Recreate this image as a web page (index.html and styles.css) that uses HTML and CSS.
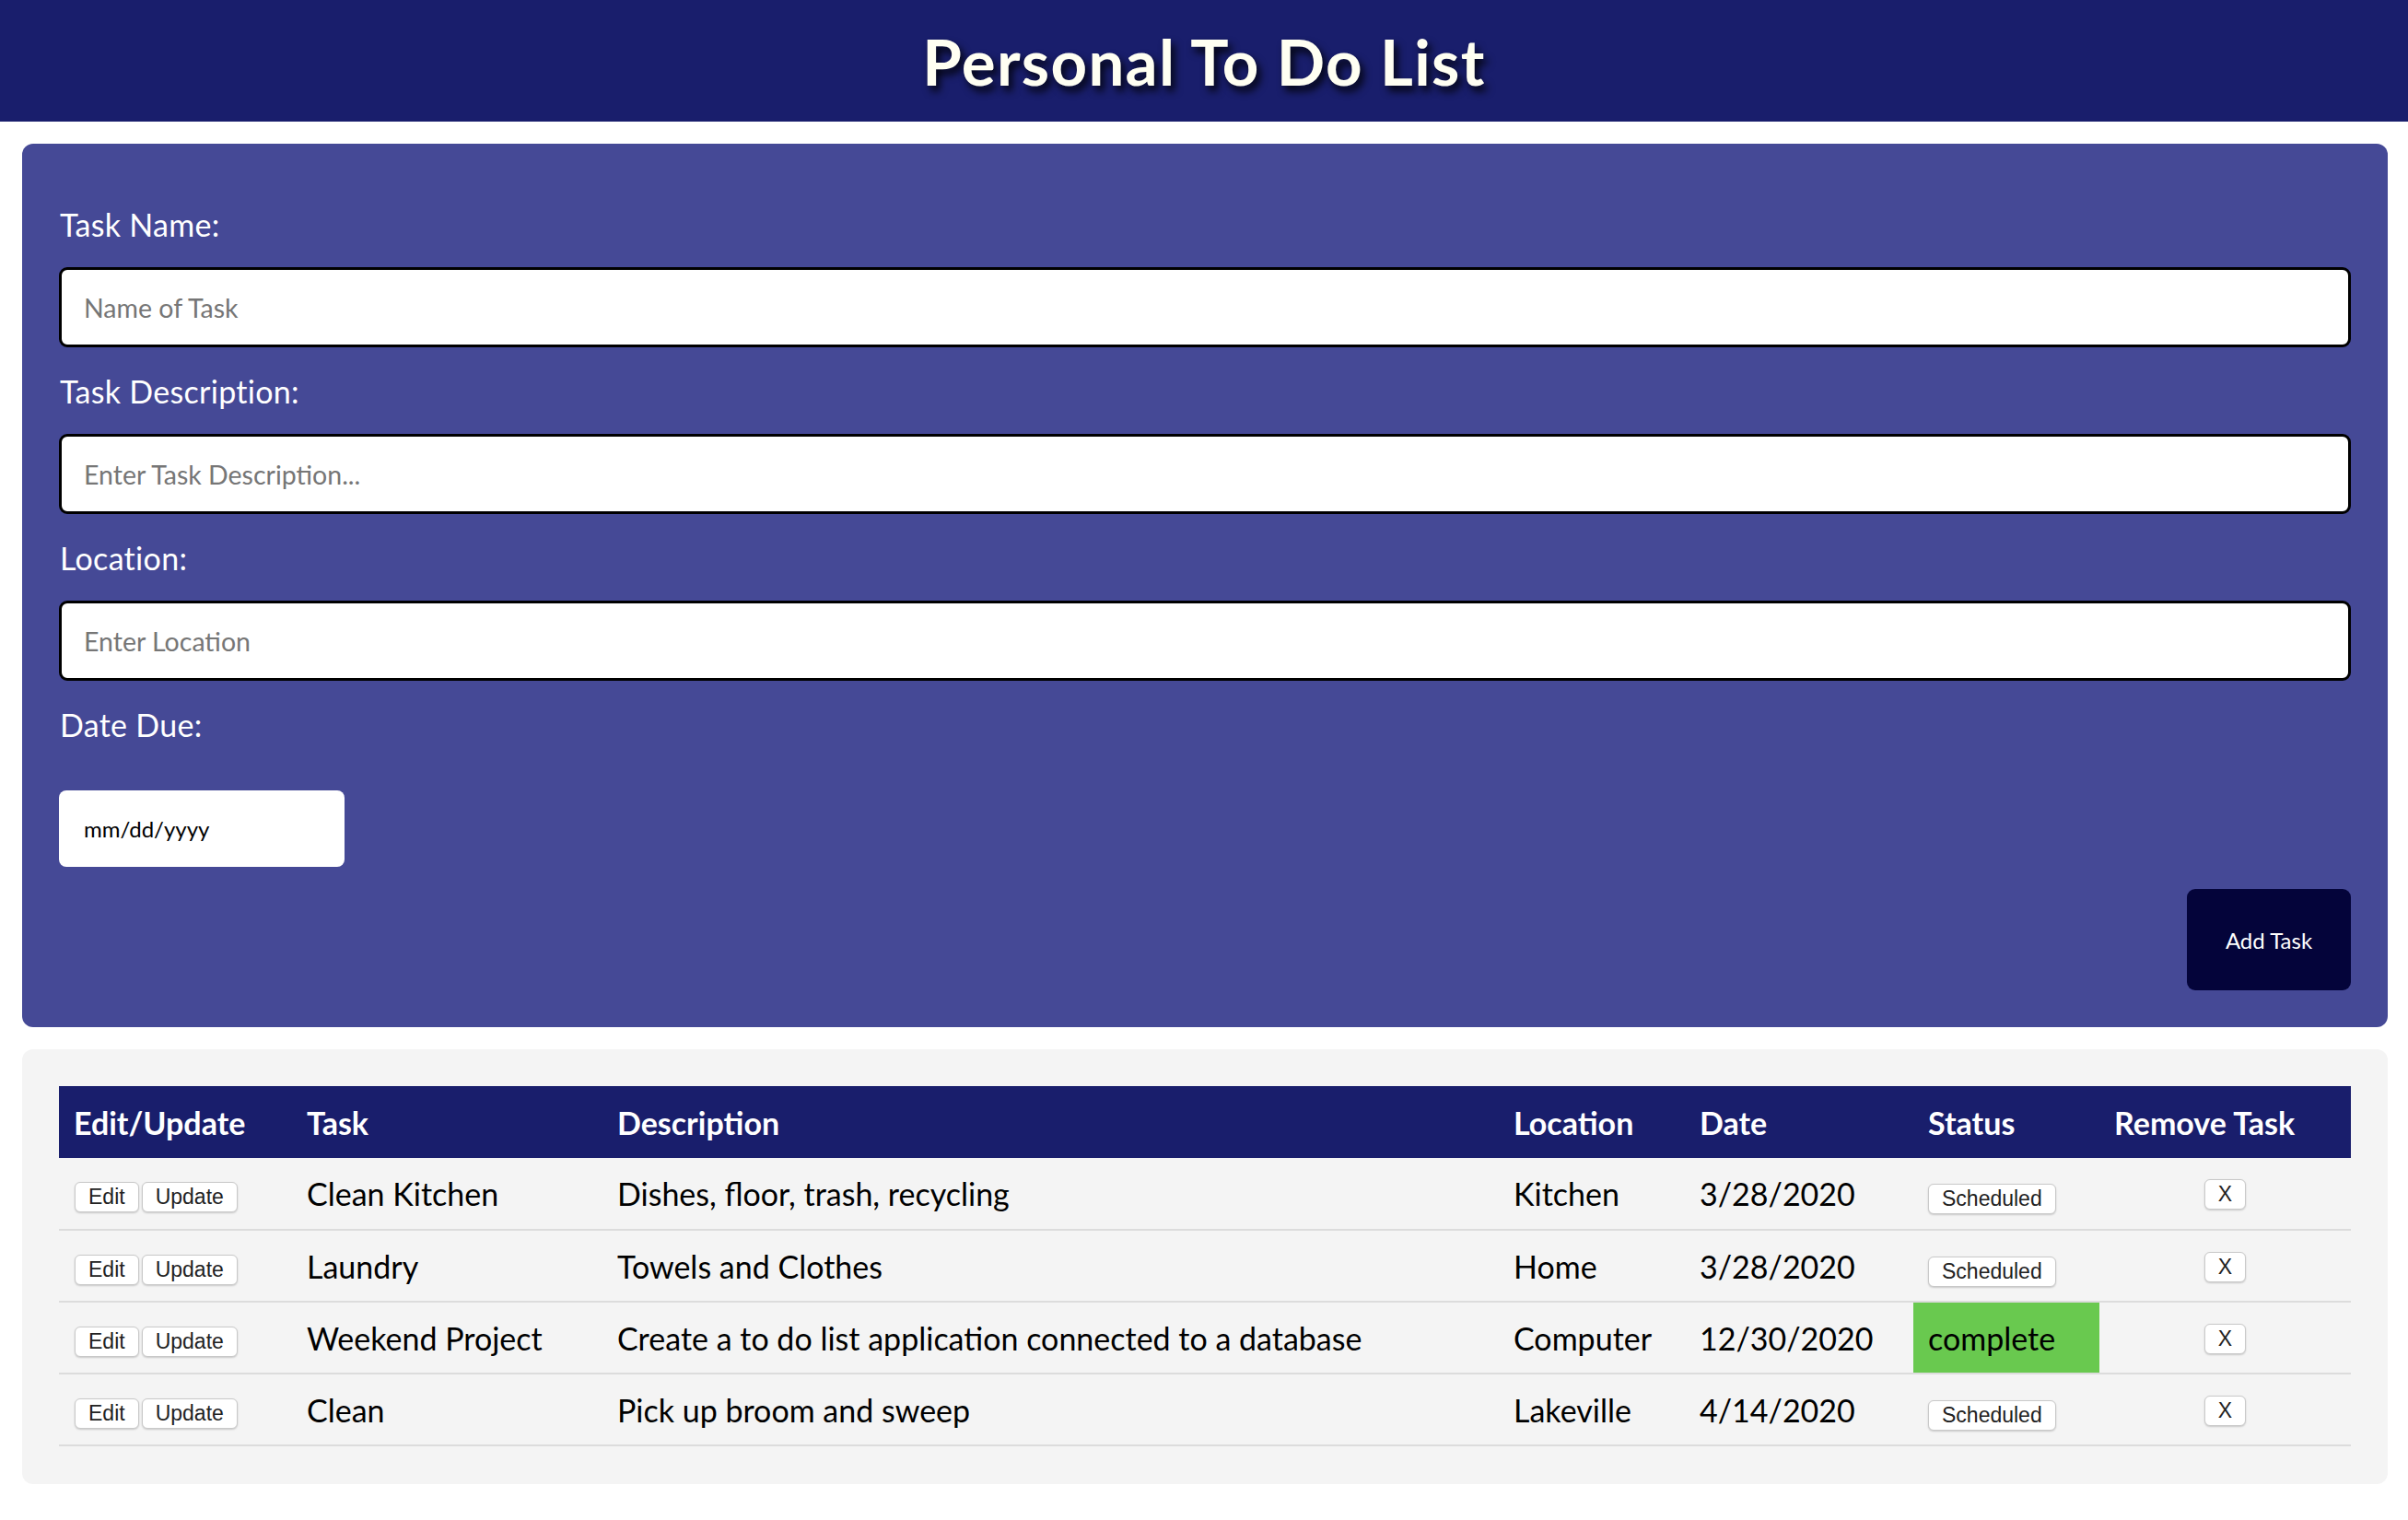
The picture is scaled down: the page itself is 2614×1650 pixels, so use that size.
FILE: index.html
```html
<!DOCTYPE html>
<html lang="en">
<head>
<meta charset="utf-8">
<title>Personal To Do List</title>
<link rel="stylesheet" href="styles.css">
</head>
<body>
<header class="topbar">
  <h1 class="title">Personal To Do List</h1>
</header>

<main class="page">
  <form class="form-card">
    <div class="field">
      <label class="field-label" for="taskName">Task Name:</label>
      <input class="text-input" id="taskName" type="text" placeholder="Name of Task">
    </div>
    <div class="field">
      <label class="field-label" for="taskDesc">Task Description:</label>
      <input class="text-input" id="taskDesc" type="text" placeholder="Enter Task Description...">
    </div>
    <div class="field">
      <label class="field-label" for="taskLoc">Location:</label>
      <input class="text-input" id="taskLoc" type="text" placeholder="Enter Location">
    </div>
    <div class="field field-date">
      <label class="field-label" for="taskDate">Date Due:</label>
      <input class="date-input" id="taskDate" type="text" placeholder="mm/dd/yyyy">
    </div>
    <div class="form-actions">
      <button class="add-btn" type="button">Add Task</button>
    </div>
  </form>

  <section class="table-card">
    <table class="task-table">
      <thead>
        <tr>
          <th class="c-edit">Edit/Update</th>
          <th class="c-task">Task</th>
          <th class="c-desc">Description</th>
          <th class="c-loc">Location</th>
          <th class="c-date">Date</th>
          <th class="c-status">Status</th>
          <th class="c-remove">Remove Task</th>
        </tr>
      </thead>
      <tbody>
        <tr class="first-row">
          <td><div class="btn-pair"><button class="mini-btn">Edit</button><button class="mini-btn">Update</button></div></td>
          <td>Clean Kitchen</td>
          <td>Dishes, floor, trash, recycling</td>
          <td>Kitchen</td>
          <td>3/28/2020</td>
          <td><button class="mini-btn status-btn">Scheduled</button></td>
          <td class="cell-remove"><button class="mini-btn x-btn">X</button></td>
        </tr>
        <tr>
          <td><div class="btn-pair"><button class="mini-btn">Edit</button><button class="mini-btn">Update</button></div></td>
          <td>Laundry</td>
          <td>Towels and Clothes</td>
          <td>Home</td>
          <td>3/28/2020</td>
          <td><button class="mini-btn status-btn">Scheduled</button></td>
          <td class="cell-remove"><button class="mini-btn x-btn">X</button></td>
        </tr>
        <tr>
          <td><div class="btn-pair"><button class="mini-btn">Edit</button><button class="mini-btn">Update</button></div></td>
          <td>Weekend Project</td>
          <td>Create a to do list application connected to a database</td>
          <td>Computer</td>
          <td>12/30/2020</td>
          <td class="cell-complete">complete</td>
          <td class="cell-remove"><button class="mini-btn x-btn">X</button></td>
        </tr>
        <tr>
          <td><div class="btn-pair"><button class="mini-btn">Edit</button><button class="mini-btn">Update</button></div></td>
          <td>Clean</td>
          <td>Pick up broom and sweep</td>
          <td>Lakeville</td>
          <td>4/14/2020</td>
          <td><button class="mini-btn status-btn">Scheduled</button></td>
          <td class="cell-remove"><button class="mini-btn x-btn">X</button></td>
        </tr>
      </tbody>
    </table>
  </section>
</main>
</body>
</html>
```

FILE: styles.css
```css
* {
  box-sizing: border-box;
}

body {
  margin: 0;
  background: #ffffff;
  font-family: "Comic Sans MS", "Lato", "Open Sans", sans-serif;
  color: #000000;
}

.topbar {
  height: 132px;
  background: #191e6c;
  display: flex;
  align-items: center;
  justify-content: center;
}

.title {
  margin: 0;
  font-family: "Comic Sans MS", "Lato", sans-serif;
  font-weight: 700;
  font-size: 69px;
  line-height: 80px;
  letter-spacing: 1.3px;
  color: #fffff2;
  text-shadow: 4px 6px 8px rgba(0, 0, 0, 0.85);
  padding-top: 1px;
}

.page {
  padding: 24px 22px 0 24px;
  display: flex;
  flex-direction: column;
  gap: 24px;
}

.form-card {
  background: #454996;
  border-radius: 12px;
  padding: 68px 40px 40px 40px;
  display: flex;
  flex-direction: column;
}

.field {
  display: flex;
  flex-direction: column;
  margin-bottom: 28px;
}

.field-label {
  font-size: 34px;
  line-height: 40px;
  letter-spacing: 0.3px;
  color: #ffffff;
  margin-bottom: 26px;
  padding-left: 1px;
}

.text-input {
  width: 100%;
  height: 87px;
  border: 3px solid #000000;
  border-radius: 9px;
  background: #ffffff;
  padding: 0 24px;
  font-family: "Comic Sans MS", "Lato", sans-serif;
  font-size: 28.5px;
  color: #000000;
  outline: none;
}

.text-input::placeholder {
  color: #767676;
}

.field-date {
  margin-bottom: 24px;
}

.field-date .field-label {
  margin-bottom: 51px;
}

.date-input {
  width: 310px;
  height: 83px;
  border: none;
  border-radius: 8px;
  background: #ffffff;
  padding: 0 27px;
  font-family: "Comic Sans MS", "Lato", sans-serif;
  font-size: 24px;
  color: #000000;
  outline: none;
}

.date-input::placeholder {
  color: #000000;
}

.form-actions {
  display: flex;
  justify-content: flex-end;
}

.add-btn {
  width: 178px;
  height: 110px;
  border: none;
  border-radius: 9px;
  background: #04043a;
  color: #ffffff;
  font-family: "Comic Sans MS", "Lato", sans-serif;
  font-size: 24px;
}

.table-card {
  background: #f4f4f4;
  border-radius: 12px;
  padding: 40px 40px 41px 40px;
}

.task-table {
  width: 100%;
  table-layout: fixed;
  border-collapse: separate;
  border-spacing: 0;
  font-size: 34px;
}

.task-table th {
  background: #191e6c;
  color: #ffffff;
  font-weight: 700;
  text-align: left;
  height: 78px;
  padding: 0 16px;
  vertical-align: middle;
}

.c-edit { width: 253px; }
.c-task { width: 337px; }
.c-desc { width: 973px; }
.c-loc { width: 202px; }
.c-date { width: 248px; }
.c-status { width: 202px; }
.c-remove { width: 273px; }

.task-table td {
  height: 78px;
  padding: 0 16px;
  border-bottom: 2px solid #dcdcdc;
  vertical-align: middle;
  white-space: nowrap;
}

.task-table .first-row td {
  height: 79px;
}

.btn-pair {
  display: flex;
  gap: 3px;
  padding-left: 1px;
  margin-top: 8px;
}

.mini-btn {
  height: 33px;
  padding: 0 14px;
  border: 1px solid #c9c9c9;
  border-radius: 6px;
  background: #ffffff;
  box-shadow: 0 1px 2px rgba(0, 0, 0, 0.18);
  font-family: "Liberation Sans", Arial, sans-serif;
  font-size: 23px;
  line-height: 31px;
  color: #222222;
  vertical-align: middle;
}

.status-btn {
  margin-top: 8px;
}

.cell-remove {
  text-align: center;
}

.x-btn {
  margin-bottom: 4px;
}

.task-table td.cell-complete {
  background: #69c94f;
}
```
